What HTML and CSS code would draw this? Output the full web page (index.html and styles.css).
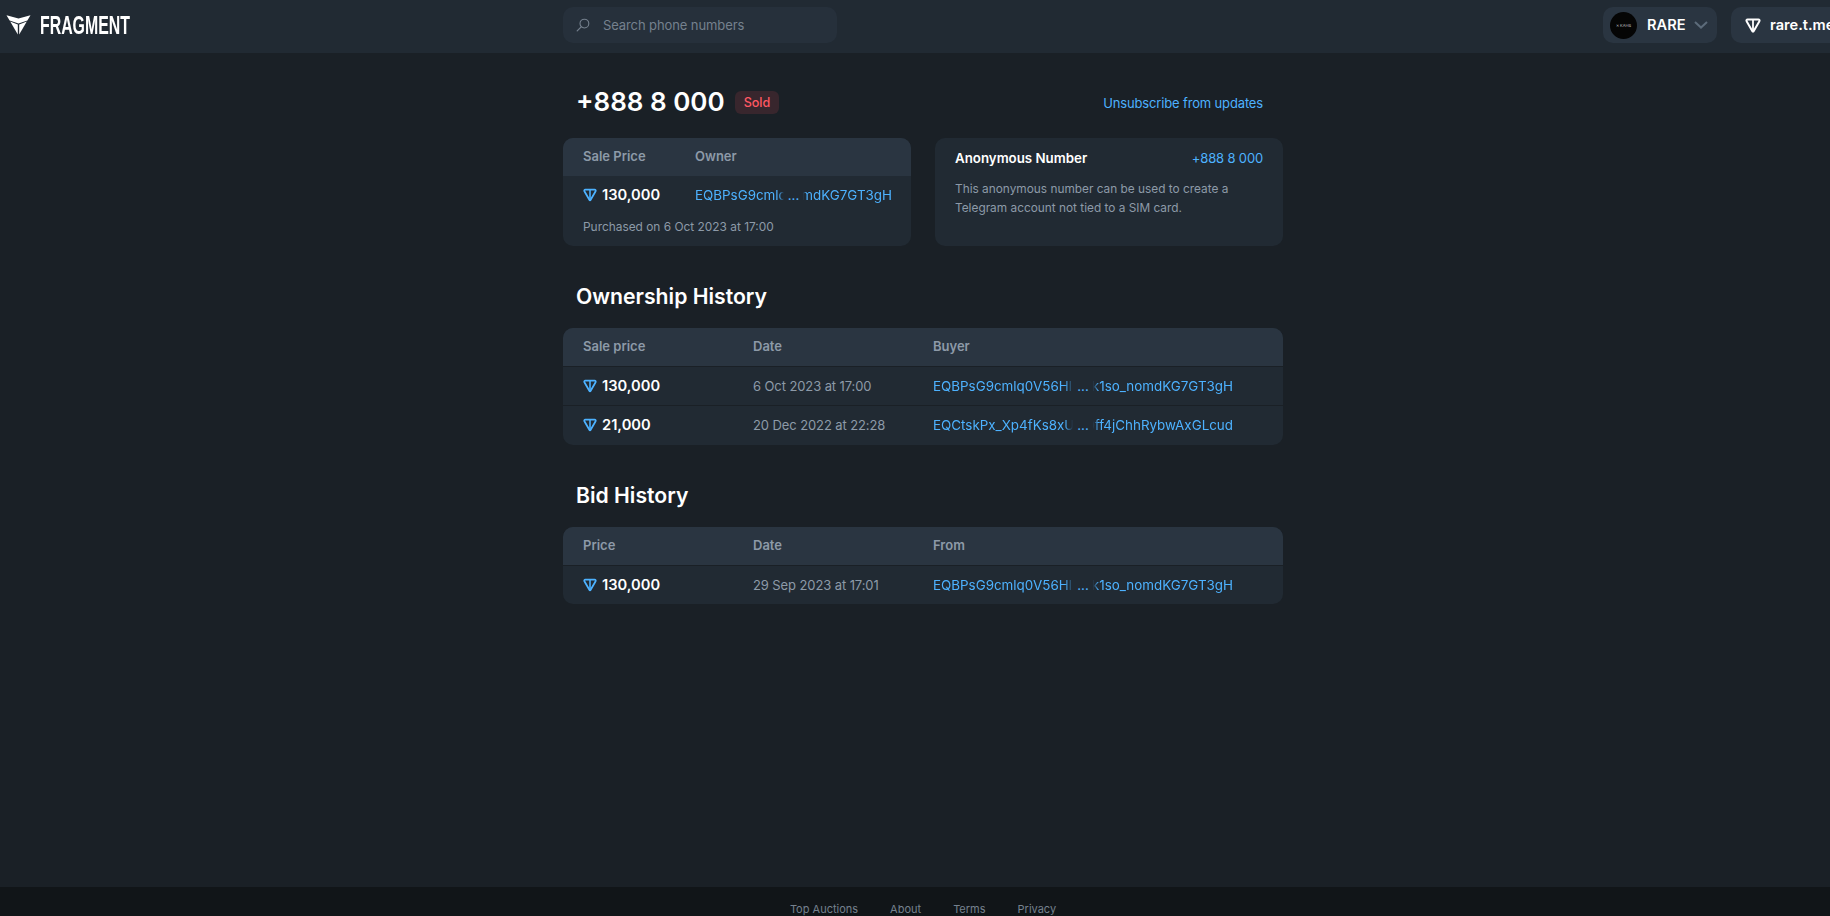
FILE: index.html
```html
<!DOCTYPE html>
<html lang="en">
<head>
<meta charset="utf-8">
<title>+888 8 000 - Fragment</title>
<link rel="stylesheet" href="styles.css">
</head>
<body>
<svg class="defs" width="0" height="0" aria-hidden="true">
  <symbol id="ton" viewBox="0 0 16 15">
    <path d="M2.6 1.4h10.8c.9 0 1.5 1 1 1.8L8.6 13.2c-.3.5-.9.5-1.2 0L1.6 3.2c-.5-.8.1-1.8 1-1.8Z" fill="none" stroke="currentColor" stroke-width="2" stroke-linejoin="round"/>
    <path d="M8 1.6V13" fill="none" stroke="currentColor" stroke-width="1.8"/>
  </symbol>
</svg>
<div class="page">
  <header class="header">
    <a class="logo" href="#">
      <svg class="logo-mark" viewBox="0 0 24 20" aria-hidden="true">
        <path d="M0 0.3 12 3.6 24 0.3 20.9 5.5 12 8.6 3.1 5.5Z" fill="#fff"/>
        <path d="M3.7 6.6 11.3 9.4V19.6Z" fill="#fff"/>
        <path d="M20.3 6.6 12.7 9.4V19.6Z" fill="#fff"/>
      </svg>
      <span class="logo-text">FRAGMENT</span>
    </a>
    <div class="search">
      <svg class="search-icon" viewBox="0 0 14 14" aria-hidden="true">
        <circle cx="8.4" cy="5.6" r="4.4" fill="none" stroke="currentColor" stroke-width="1.1"/>
        <path d="M5.2 8.8 1.2 12.8" fill="none" stroke="currentColor" stroke-width="1.2" stroke-linecap="round"/>
      </svg>
      <span class="search-text">Search phone numbers</span>
    </div>
    <div class="header-actions">
      <button class="pill pill-account">
        <span class="avatar"><span class="avatar-text">✕ KAHB</span></span>
        <span class="pill-label">RARE</span>
        <svg class="chevron" viewBox="0 0 14 8" aria-hidden="true"><path d="M1 1l6 5.6L13 1" fill="none" stroke="currentColor" stroke-width="2"/></svg>
      </button>
      <button class="pill pill-wallet">
        <svg class="ton-white"><use href="#ton"/></svg>
        <span class="pill-label">rare.t.me</span>
      </button>
    </div>
  </header>

  <main class="main">
    <div class="title-row">
      <div class="title-left">
        <h1 class="title">+888 8 000</h1>
        <span class="badge">Sold</span>
      </div>
      <a class="link" href="#">Unsubscribe from updates</a>
    </div>

    <div class="cards">
      <section class="card">
        <div class="summary-head">
          <span class="col-price">Sale Price</span>
          <span>Owner</span>
        </div>
        <div class="summary-row">
          <span class="col-price price"><svg class="ton"><use href="#ton"/></svg>130,000</span>
          <a class="addr addr-short" href="#"><span class="addr-head">EQBPsG9cmlq0V56Hlk</span><span class="addr-dots">...</span><span class="addr-tail"><span>0k1so_nomdKG7GT3gH</span></span></a>
        </div>
        <p class="purchased">Purchased on 6 Oct 2023 at 17:00</p>
      </section>
      <section class="card info-card">
        <div class="info-head">
          <span class="info-title">Anonymous Number</span>
          <a class="link" href="#">+888 8 000</a>
        </div>
        <p class="info-text">This anonymous number can be used to create a Telegram account not tied to a SIM card.</p>
      </section>
    </div>

    <h2 class="section-title">Ownership History</h2>
    <section class="table">
      <div class="tr th"><span>Sale price</span><span>Date</span><span>Buyer</span></div>
      <div class="tr">
        <span class="price"><svg class="ton"><use href="#ton"/></svg>130,000</span>
        <span class="date">6 Oct 2023 at 17:00</span>
        <a class="addr addr-long" href="#"><span class="addr-head">EQBPsG9cmlq0V56Hlk</span><span class="addr-dots">...</span><span class="addr-tail"><span>0k1so_nomdKG7GT3gH</span></span></a>
      </div>
      <div class="tr">
        <span class="price"><svg class="ton"><use href="#ton"/></svg>21,000</span>
        <span class="date">20 Dec 2022 at 22:28</span>
        <a class="addr addr-long" href="#"><span class="addr-head">EQCtskPx_Xp4fKs8xU3k</span><span class="addr-dots">...</span><span class="addr-tail"><span>0ff4jChhRybwAxGLcud</span></span></a>
      </div>
    </section>

    <h2 class="section-title">Bid History</h2>
    <section class="table">
      <div class="tr th"><span>Price</span><span>Date</span><span>From</span></div>
      <div class="tr">
        <span class="price"><svg class="ton"><use href="#ton"/></svg>130,000</span>
        <span class="date">29 Sep 2023 at 17:01</span>
        <a class="addr addr-long" href="#"><span class="addr-head">EQBPsG9cmlq0V56Hlk</span><span class="addr-dots">...</span><span class="addr-tail"><span>0k1so_nomdKG7GT3gH</span></span></a>
      </div>
    </section>
  </main>

  <footer class="footer">
    <a href="#">Top Auctions</a>
    <a href="#">About</a>
    <a href="#">Terms</a>
    <a href="#">Privacy</a>
  </footer>
</div>
</body>
</html>
```

FILE: styles.css
```css
* { box-sizing: border-box; }
html, body { margin: 0; height: 100%; overflow: hidden; background: #1a2026; }
body { font-family: "Inter", "Roboto", sans-serif; font-size: 13px; color: #fff; }
a { color: #4db2ff; text-decoration: none; }
.defs { position: absolute; }

.page { width: 1846px; height: 916px; display: flex; flex-direction: column; }

.header { flex: none; height: 53px; padding-bottom: 3px; background: #212a33; display: grid; grid-template-columns: 1fr 720px 1fr; align-items: center; }
.logo { display: flex; align-items: center; gap: 9px; padding-left: 6px; color: #fff; }
.logo-mark { width: 25px; height: 20px; }
.logo-text { font-family: "Liberation Sans", sans-serif; font-weight: 700; font-size: 26px; line-height: 24px; transform: scaleX(0.61); transform-origin: left center; }
.search { height: 36px; width: 274px; background: #26303b; border-radius: 10px; display: flex; align-items: center; padding-left: 13px; gap: 13px; color: #75818e; }
.search-icon { width: 14px; height: 14px; }
.search-text { font-size: 13px; letter-spacing: -0.1px; }
.header-actions { display: flex; justify-content: flex-end; gap: 14px; }
.pill { height: 36px; border: 0; border-radius: 10px; background: #2a3541; color: #fff; display: flex; align-items: center; font: inherit; padding: 0; }
.pill-account { width: 114px; padding-left: 7px; }
.pill-wallet { width: 115px; padding-left: 14px; gap: 9px; }
.avatar { width: 27px; height: 27px; border-radius: 50%; background: #050505; display: flex; align-items: center; justify-content: center; }
.avatar-text { font-size: 4px; color: #bbb; white-space: nowrap; }
.pill-label { font-weight: 600; font-size: 14.6px; }
.pill-account .pill-label { margin-left: 10px; }
.chevron { width: 14px; height: 8px; margin-left: 8px; color: #5c6b7a; }
.ton-white { width: 16px; height: 15px; color: #fff; }

.main { flex: 1; width: 720px; margin: 0 auto; min-height: 0; }
.title-row { height: 85px; display: flex; align-items: flex-start; justify-content: space-between; padding: 0 20px 0 13px; }
.title-left { display: flex; align-items: center; gap: 10px; margin-top: 31px; }
.title { margin: 0; font-size: 26px; line-height: 36px; font-weight: 600; }
.badge { font-size: 12.6px; font-weight: 500; color: #ff5863; background: #38262d; border-radius: 6px; padding: 0 9px; height: 23px; line-height: 23px; }
.title-row > .link { margin-top: 40px; line-height: 20px; font-size: 13px; letter-spacing: -0.15px; }

.cards { display: flex; gap: 24px; }
.card { width: 348px; height: 108px; background: #212a33; border-radius: 10px; overflow: hidden; }
.summary-head { height: 38px; padding-bottom: 2px; background: #2a3541; display: flex; align-items: center; padding-left: 20px; color: #8d9aa8; font-weight: 600; font-size: 13px; }
.col-price { width: 112px; flex: none; }
.summary-row { height: 39px; padding-bottom: 1px; display: flex; align-items: center; padding-left: 20px; }
.price { display: flex; align-items: center; font-size: 14.7px; font-weight: 600; color: #fff; }
.ton { width: 14px; height: 14px; margin-right: 5px; color: #4db2ff; }
.purchased { margin: 3px 0 0; padding-left: 20px; font-size: 11.9px; line-height: 18px; color: #8d9aa8; }

.addr { display: flex; align-items: center; font-size: 13.4px; white-space: nowrap; }
.addr-head { overflow: hidden; display: block; -webkit-mask-image: linear-gradient(90deg, #000 94%, transparent); mask-image: linear-gradient(90deg, #000 94%, transparent); }
.addr-dots { padding: 0 4px; flex: none; }
.addr-tail { display: flex; justify-content: flex-end; overflow: hidden; -webkit-mask-image: linear-gradient(270deg, #000 96%, transparent); mask-image: linear-gradient(270deg, #000 96%, transparent); }
.addr-tail > span { flex: none; }
.addr-short { width: 197px; }
.addr-short .addr-head { width: 92px; }
.addr-short .addr-tail { width: 92px; }
.addr-long { width: 300px; }
.addr-long .addr-head { width: 142px; }
.addr-long .addr-tail { width: 142px; }

.info-card { padding: 0 20px; }
.info-head { height: 38px; padding-top: 1px; display: flex; align-items: center; justify-content: space-between; font-size: 13px; }
.info-head .link { letter-spacing: -0.15px; }
.info-title { font-weight: 600; font-size: 13.3px; }
.info-text { margin: 4px 0 0; font-size: 11.85px; line-height: 19px; color: #8d9aa8; }

.section-title { margin: 0; padding-left: 13px; height: 82px; line-height: 36px; padding-top: 32px; font-size: 21.2px; font-weight: 600; }
.table { background: #212a33; border-radius: 10px; overflow: hidden; }
.tr { display: grid; grid-template-columns: 170px 180px 1fr; align-items: center; height: 39px; padding-left: 20px; padding-bottom: 1px; border-top: 1px solid #1a2026; }
.tr + .tr + .tr { height: 40px; }
.th { height: 38px; padding-bottom: 2px; background: #2a3541; border-top: 0; color: #8d9aa8; font-weight: 600; font-size: 13px; }
.date { color: #8d9aa8; font-size: 13px; letter-spacing: -0.1px; }

.footer { flex: none; height: 29px; background: #111518; display: flex; justify-content: center; gap: 32px; padding-top: 13px; font-size: 11px; line-height: 18px; }
.footer a { color: #75818e; }
```
